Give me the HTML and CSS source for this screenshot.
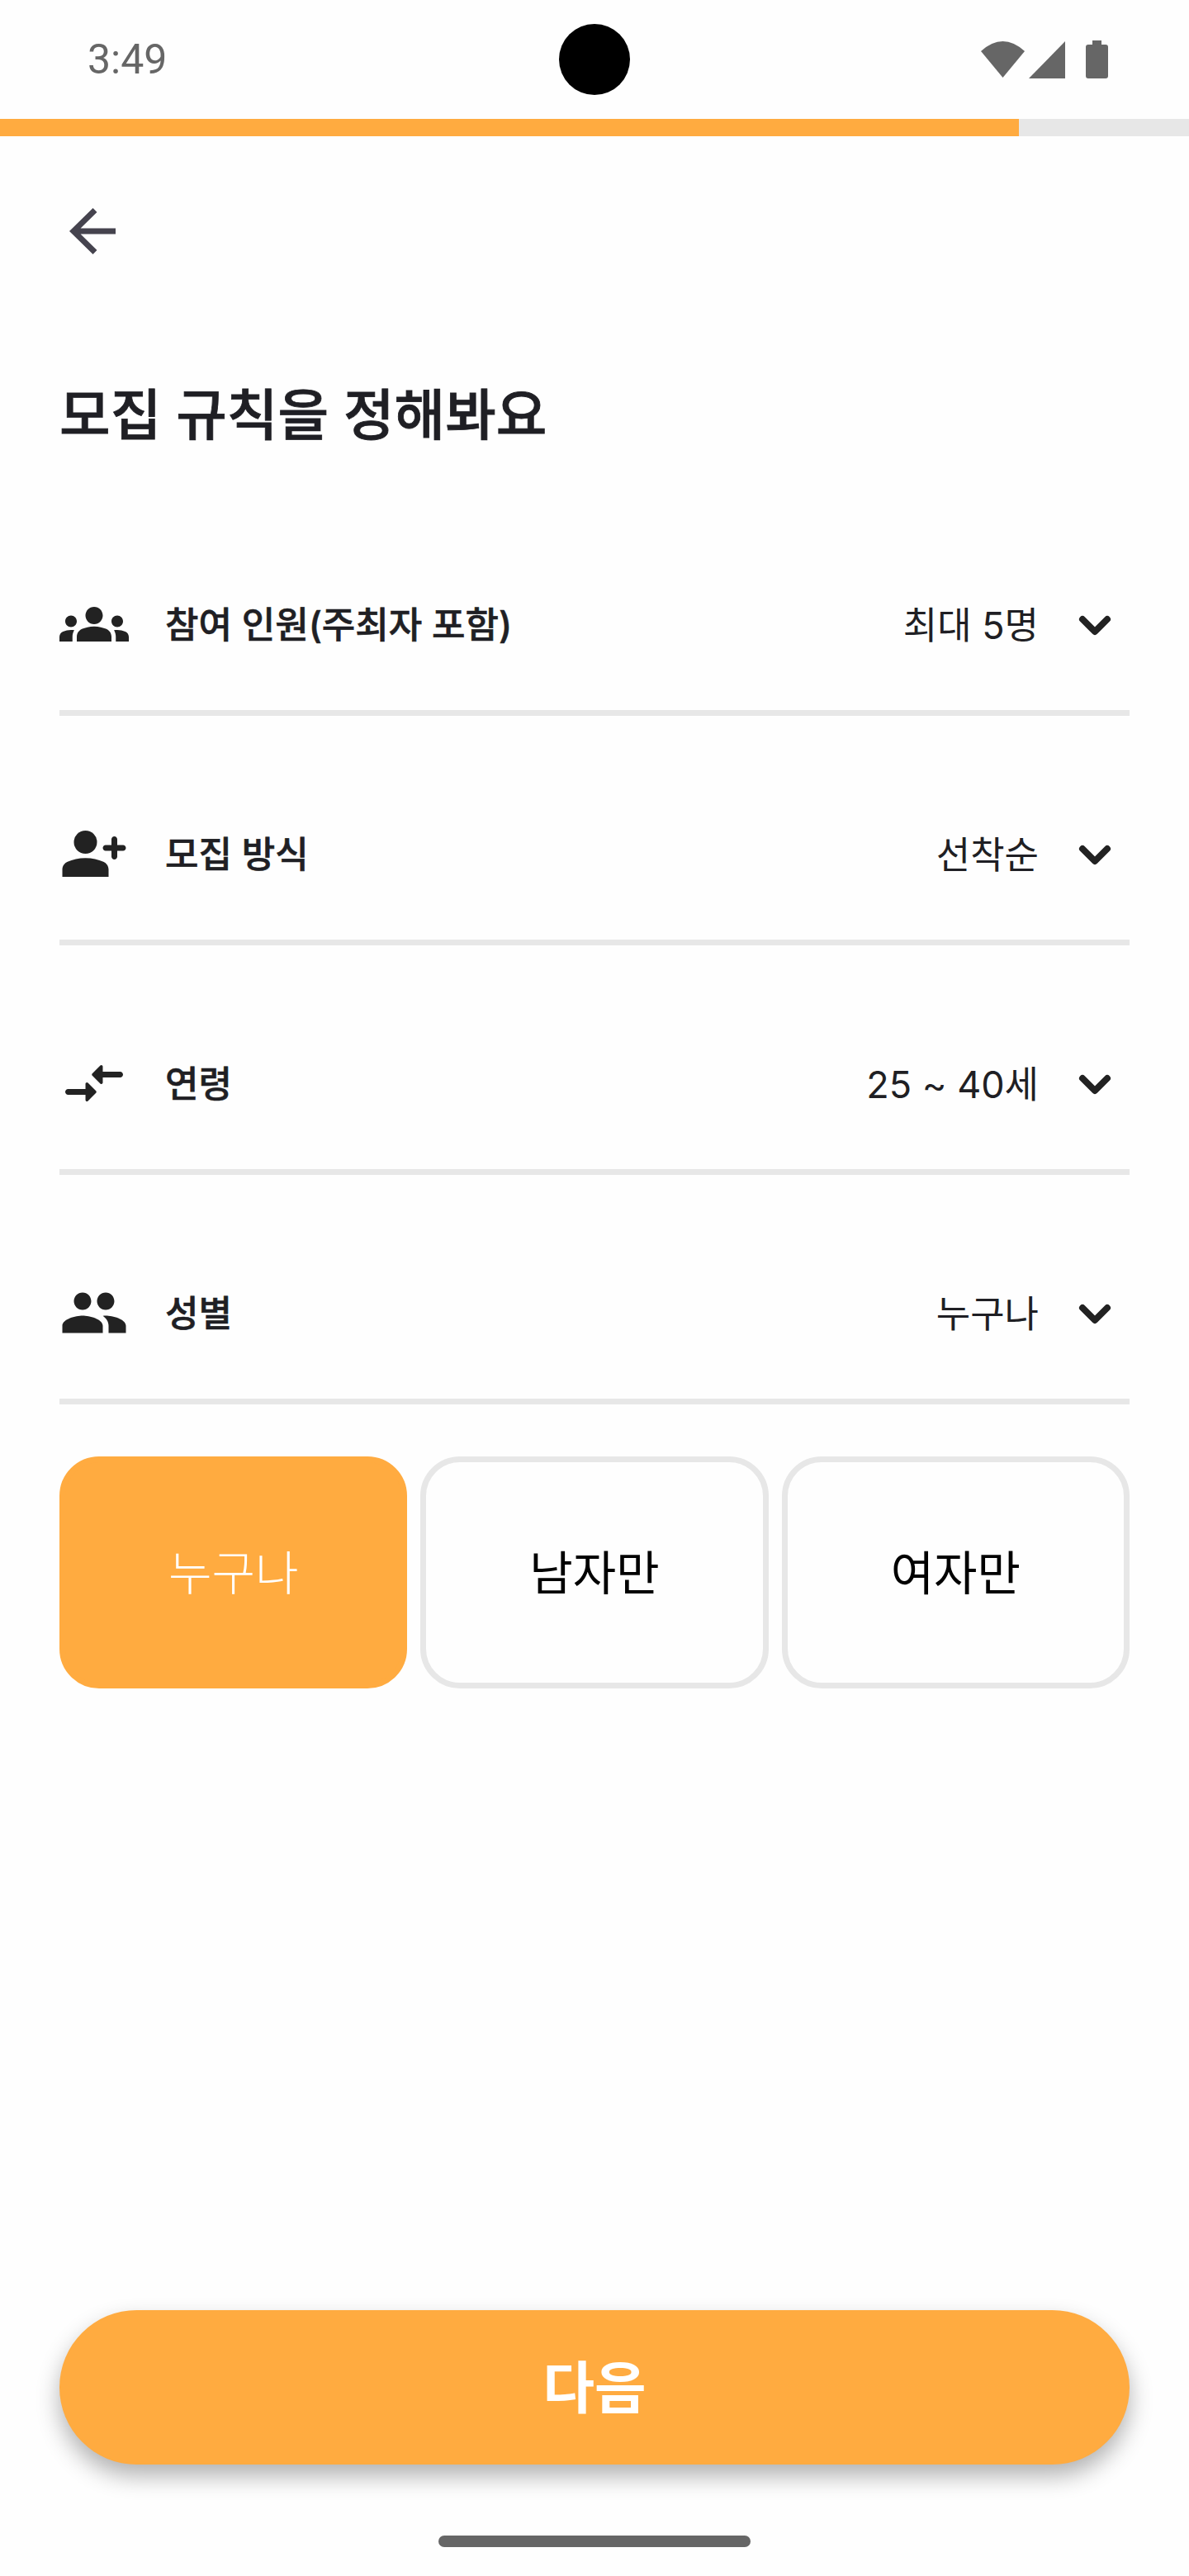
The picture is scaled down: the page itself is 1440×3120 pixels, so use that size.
FILE: index.html
```html
<!DOCTYPE html>
<html lang="ko">
<head>
  <meta charset="UTF-8" />
  <meta name="viewport" content="width=device-width, initial-scale=1.0" />
  <title>모집 규칙</title>
  <link rel="stylesheet" href="styles.css">
</head>
<body>
  <div class="page">
    <div class="status-bar">
      <span class="time">3:49</span>
      <span class="camera"></span>
      <svg class="status-icons" width="154" height="46" viewBox="0 0 154 46">
        <path d="M26.5 45 0 13Q26.5-11 53 13Z"/>
        <path d="M58 46 102 1V46Z"/>
        <path d="M135 0h11v5h5q3 0 3 3v35q0 3-3 3h-21q-3 0-3-3V8q0-3 3-3h5Z"/>
      </svg>
    </div>
    <div class="progress"><div class="progress-fill"></div></div>

    <div class="nav">
      <svg class="back" width="64" height="64" viewBox="0 0 64 64">
        <path d="M60 32H10M35 6.500 9 32l26 25.500" />
      </svg>
    </div>

    <h1 class="title">모집 규칙을 정해봐요</h1>

    <div class="rules">
      <div class="rule">
        <svg class="rule-icon" width="84" height="84" viewBox="0 0 24 24">
          <path d="M12 12.750c1.630 0 3.070.390 4.240.900 1.080.480 1.760 1.560 1.760 2.730V18H6v-1.610c0-1.180.680-2.260 1.760-2.730 1.170-.520 2.610-.910 4.240-.910zM4 13c1.100 0 2-.900 2-2s-.900-2-2-2-2 .900-2 2 .900 2 2 2zm1.130 1.100c-.370-.060-.740-.100-1.130-.100-.990 0-1.930.210-2.780.580C.480 14.900 0 15.620 0 16.430V18h4.500v-1.610c0-.830.230-1.610.630-2.290zM20 13c1.100 0 2-.900 2-2s-.900-2-2-2-2 .900-2 2 .900 2 2 2zm4 3.430c0-.810-.480-1.530-1.220-1.850-.850-.370-1.790-.580-2.780-.580-.390 0-.760.040-1.130.100.400.680.630 1.460.630 2.290V18H24v-1.570zM12 6c1.660 0 3 1.340 3 3s-1.340 3-3 3-3-1.340-3-3 1.340-3 3-3z"/>
        </svg>
        <span class="rule-label">참여 인원(주최자 포함)</span>
        <span class="rule-value">최대 5명</span>
        <svg class="chevron" width="56" height="56" viewBox="0 0 56 56"><path d="M13 22 28 37 43 22"/></svg>
      </div>
      <div class="rule">
        <svg class="rule-icon" width="84" height="84" viewBox="0 0 24 24">
          <circle cx="9" cy="8" r="4"/>
          <path d="M1 20v-2.500c0-1.200.700-2.200 1.800-2.700 1.700-.800 3.900-1.300 6.200-1.300s4.500.500 6.200 1.300c1.100.500 1.800 1.500 1.800 2.700V20z"/>
          <path d="M19 6c.550 0 1 .450 1 1v2h2c.550 0 1 .450 1 1s-.450 1-1 1h-2v2c0 .550-.450 1-1 1s-1-.450-1-1v-2h-2c-.550 0-1-.450-1-1s.450-1 1-1h2V7c0-.550.450-1 1-1z"/>
        </svg>
        <span class="rule-label">모집 방식</span>
        <span class="rule-value">선착순</span>
        <svg class="chevron" width="56" height="56" viewBox="0 0 56 56"><path d="M13 22 28 37 43 22"/></svg>
      </div>
      <div class="rule">
        <svg class="rule-icon" width="84" height="84" viewBox="0 0 24 24">
          <path d="M9.010 14H3c-.550 0-1 .450-1 1s.450 1 1 1h6.010v1.790c0 .450.540.670.850.350l2.780-2.790c.190-.200.190-.510 0-.710l-2.780-2.790c-.310-.320-.850-.090-.850.350V14zm5.980-.790V10H21c.550 0 1-.450 1-1s-.450-1-1-1h-6.010V6.210c0-.450-.540-.670-.850-.350l-2.780 2.790c-.190.200-.190.510 0 .710l2.780 2.790c.310.310.850.090.850-.350z"/>
        </svg>
        <span class="rule-label">연령</span>
        <span class="rule-value">25 ~ 40세</span>
        <svg class="chevron" width="56" height="56" viewBox="0 0 56 56"><path d="M13 22 28 37 43 22"/></svg>
      </div>
      <div class="rule">
        <svg class="rule-icon" width="84" height="84" viewBox="0 0 24 24">
          <path d="M16 11c1.660 0 2.990-1.340 2.990-3S17.660 5 16 5c-1.660 0-3 1.340-3 3s1.340 3 3 3zm-8 0c1.660 0 2.990-1.340 2.990-3S9.660 5 8 5C6.340 5 5 6.340 5 8s1.340 3 3 3zm0 2c-2.330 0-7 1.170-7 3.500V19h14v-2.500c0-2.330-4.670-3.500-7-3.500zm8 0c-.290 0-.620.020-.970.050 1.160.840 1.970 1.970 1.970 3.450V19h6v-2.500c0-2.330-4.670-3.500-7-3.500z"/>
        </svg>
        <span class="rule-label">성별</span>
        <span class="rule-value">누구나</span>
        <svg class="chevron" width="56" height="56" viewBox="0 0 56 56"><path d="M13 22 28 37 43 22"/></svg>
      </div>
    </div>

    <div class="options">
      <div class="option selected">누구나</div>
      <div class="option">남자만</div>
      <div class="option">여자만</div>
    </div>

    <button class="next-btn">다음</button>
    <div class="home-bar"></div>
  </div>
</body>
</html>
```

FILE: styles.css
```css
:root {
  --accent: #ffab40;
  --line: #e7e7e7;
  --text: #1f1f24;
  --system: #666666;
  --font: Inter, 'Noto Sans CJK KR', sans-serif;
}
* { box-sizing: border-box; }
body {
  margin: 0;
  background: #fefefe;
  color: var(--text);
  font-family: var(--font);
}
.page {
  display: flex;
  flex-direction: column;
  width: 1440px;
  height: 3120px;
  overflow: hidden;
}

/* status bar */
.status-bar {
  display: grid;
  grid-template-columns: 1fr 86px 1fr;
  align-items: center;
  height: 144px;
  padding: 0 98px;
}
.time {
  margin-left: 8px;
  font-family: Roboto, sans-serif;
  font-size: 50px;
  color: var(--system);
}
.camera {
  width: 86px;
  height: 86px;
  border-radius: 50%;
  background: #000;
}
.status-icons { justify-self: end; fill: var(--system); }

.progress { height: 21px; background: var(--line); }
.progress-fill { width: 1234px; height: 100%; background: var(--accent); }

.nav { padding: 83px 0 0 80px; }
.back { display: block; fill: none; stroke: #45434e; stroke-width: 7; }

.title {
  margin: 151px 0 46px 72px;
  font-size: 67px;
  line-height: 80px;
  font-weight: 500;
  -webkit-text-stroke: 0.8px var(--text);
}

/* rule rows */
.rules { padding: 0 72px; }
.rule {
  display: flex;
  align-items: center;
  height: 278px;
  padding: 111px 0 48px;
  border-bottom: 7px solid var(--line);
}
.rule-icon { flex: none; fill: #222222; }
.rule-label {
  margin: -4px 0 0 44px;
  font-size: 44px;
  font-weight: 500;
  -webkit-text-stroke: 0.6px var(--text);
}
.rule-value {
  margin: -4px 0 0 auto;
  font-size: 45px;
  font-weight: 400;
}
.chevron {
  flex: none;
  margin: 0 14px 0 40px;
  fill: none;
  stroke: #222222;
  stroke-width: 8;
  stroke-linecap: round;
  stroke-linejoin: round;
}

/* gender choice */
.options {
  display: grid;
  grid-template-columns: repeat(3, 1fr);
  gap: 16px;
  margin: 63px 72px 0;
}
.option {
  display: flex;
  justify-content: center;
  align-items: center;
  height: 281px;
  padding-bottom: 8px;
  border: 7px solid var(--line);
  border-radius: 48px;
  font-size: 57px;
  color: #000;
}
.option.selected {
  background: var(--accent);
  border-color: var(--accent);
  color: #fff;
  font-weight: 300;
}

.next-btn {
  flex: none;
  margin: auto 72px 0;
  height: 187px;
  padding-bottom: 10px;
  border: none;
  border-radius: 94px;
  background: var(--accent);
  color: #fff;
  font-family: var(--font);
  font-size: 68px;
  font-weight: 700;
  box-shadow: 0 14px 28px rgba(0,0,0,0.3);
}
.home-bar {
  flex: none;
  align-self: center;
  width: 378px;
  height: 14px;
  margin: 86px 0 35px;
  border-radius: 7px;
  background: var(--system);
}
```
